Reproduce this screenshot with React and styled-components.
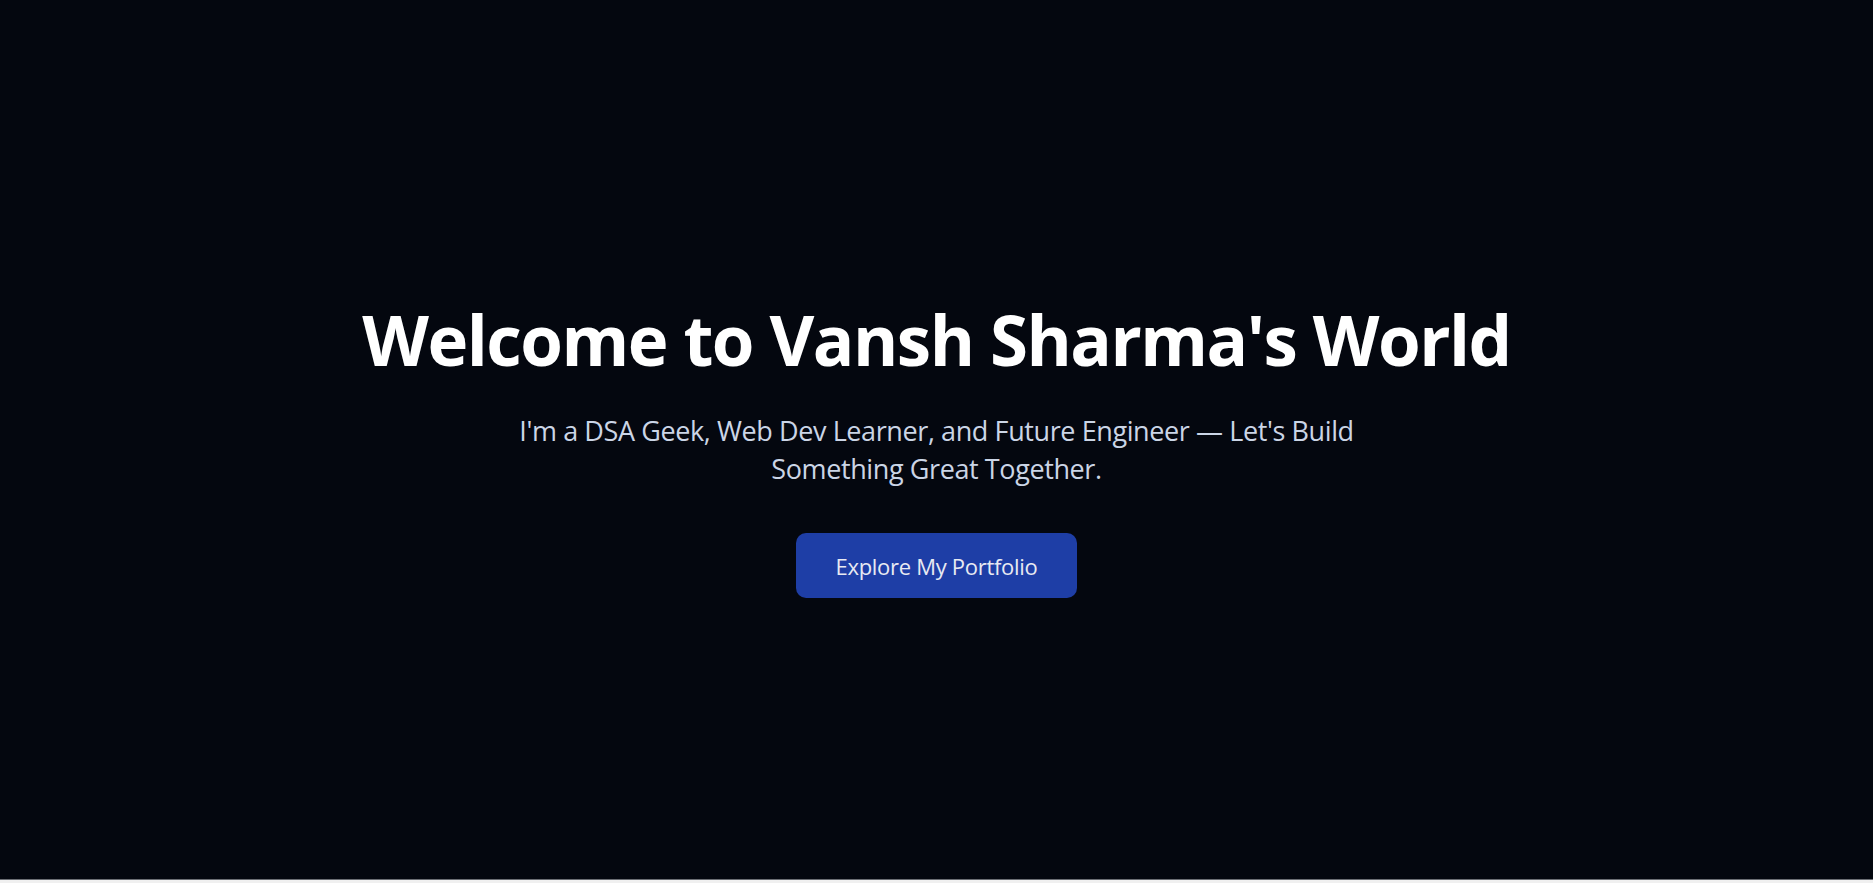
import React from 'react'
import styled, { createGlobalStyle } from 'styled-components'

const GlobalStyle = createGlobalStyle`
  * {
    box-sizing: border-box;
  }
  body {
    margin: 0;
    background: #f0f0f0;
    font-family: 'Open Sans', 'Noto Sans', sans-serif;
  }
`

function App() {
  return (
    <>
      <GlobalStyle />
      <Hero>
        <Content>
          <Title>Welcome to Vansh Sharma's World</Title>
          <Tagline>
            I'm a DSA Geek, Web Dev Learner, and Future Engineer — Let's Build
            Something Great Together.
          </Tagline>
          <CtaButton type='button'>Explore My Portfolio</CtaButton>
        </Content>
      </Hero>
    </>
  )
}

export default App

const Hero = styled.section`
  height: 880px;
  background: #04070f;
  border-bottom: 1px solid #6b6e74;
  display: flex;
  justify-content: center;
  align-items: center;
`

const Content = styled.div`
  display: flex;
  flex-direction: column;
  align-items: center;
  text-align: center;
  padding-top: 17px;
`

const Title = styled.h1`
  margin: 0;
  color: #ffffff;
  font-size: 69px;
  font-weight: 700;
  letter-spacing: -1.5px;
  line-height: 1.2;
`

const Tagline = styled.p`
  margin: 32px 0 0;
  max-width: 900px;
  color: #cbd5e6;
  font-size: 27px;
  line-height: 38px;
  letter-spacing: -0.4px;
`

const CtaButton = styled.button`
  margin-top: 45px;
  padding: 0 40px;
  height: 65px;
  border: none;
  border-radius: 10px;
  background: #1e3ea6;
  color: #e8eaf2;
  font-family: inherit;
  font-size: 22px;
  letter-spacing: -0.3px;
  cursor: pointer;

  &:hover {
    background: #1d4ed8;
  }
`
